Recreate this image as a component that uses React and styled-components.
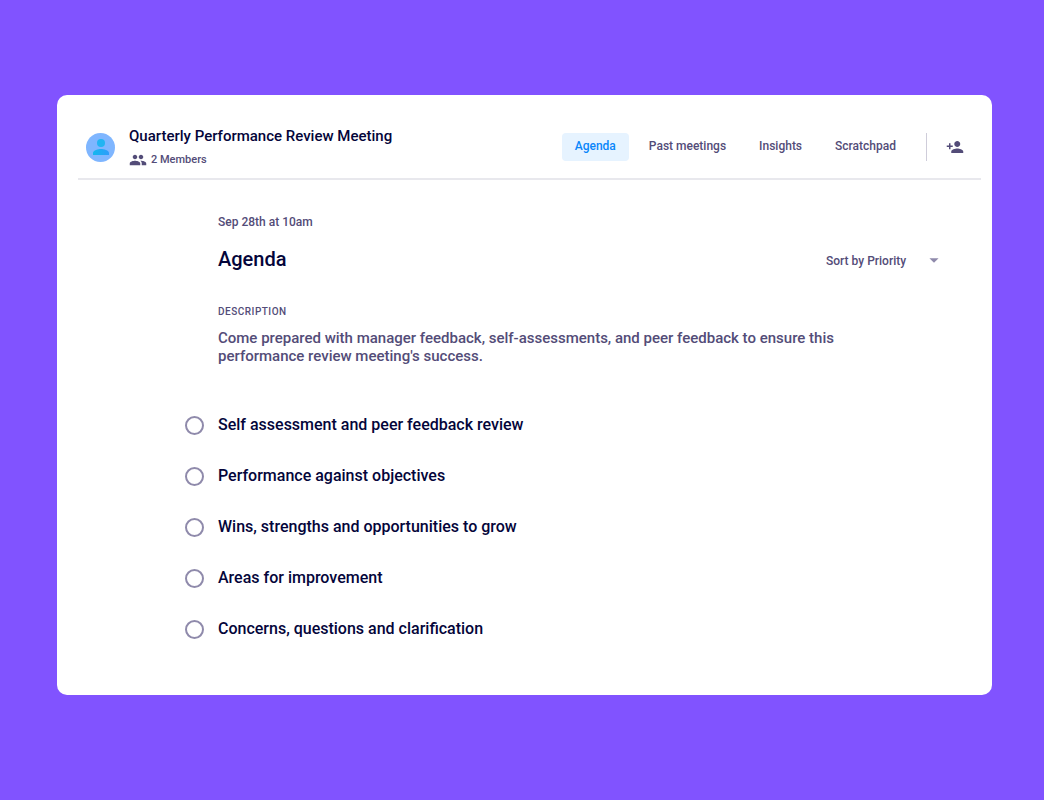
import { useState } from "react";
import styled, { ThemeProvider, createGlobalStyle } from "styled-components";
import { MdArrowDropDown, MdGroup, MdPersonAdd } from "react-icons/md";

const theme = {
  colors: {
    page: "#8153ff",
    card: "#ffffff",
    ink: "#04053a",
    muted: "#534c78",
    ring: "#8f8aab",
    line: "#e8e8ed",
    divider: "#cfcdda",
    active: "#0a86fa",
    activeBg: "#e6f3ff",
    avatar: "#7fb6ff",
  },
  fonts: {
    body: 'Roboto, "Liberation Sans", sans-serif',
  },
};

const GlobalStyle = createGlobalStyle`
  * {
    box-sizing: border-box;
  }

  body {
    margin: 0;
    background: ${({ theme }) => theme.colors.page};
    color: ${({ theme }) => theme.colors.ink};
    font-family: ${({ theme }) => theme.fonts.body};
    font-weight: 500;
  }

  button,
  select {
    font: inherit;
    color: inherit;
    border: 0;
    background: none;
    cursor: pointer;
  }
`;

const Page = styled.div`
  min-height: 100vh;
  padding: 95px 52px 105px 57px;
  display: flex;
`;

const Card = styled.main`
  flex: 1;
  min-width: 0;
  padding: 29px 11px 40px 21px;
  border-radius: 10px;
  background: ${({ theme }) => theme.colors.card};
`;

const Header = styled.header`
  display: flex;
  align-items: flex-start;
  justify-content: space-between;
  padding: 0 17px 8px 8px;
  border-bottom: 2px solid ${({ theme }) => theme.colors.line};
`;

const Meeting = styled.div`
  display: flex;
  align-items: center;
  gap: 14px;
`;

const Avatar = styled.div`
  display: flex;
  width: 29px;
  height: 29px;
  align-items: center;
  justify-content: center;
  border-radius: 50%;
  background: ${({ theme }) => theme.colors.avatar};
`;

const Title = styled.h1`
  margin: 0;
  font-size: 15px;
  font-weight: 500;
  line-height: 24px;
`;

const Members = styled.p`
  display: flex;
  align-items: center;
  gap: 4px;
  margin: 2px 0 0;
  font-size: 11px;
  line-height: 20px;
  color: ${({ theme }) => theme.colors.muted};
`;

const Nav = styled.nav`
  display: flex;
  align-items: center;
  gap: 7px;
  padding-top: 9px;
`;

const Tab = styled.button`
  height: 28px;
  padding: 0 13px 3px;
  border-radius: 4px;
  font-size: 12px;
  white-space: nowrap;
  color: ${({ theme, $active }) =>
    $active ? theme.colors.active : theme.colors.muted};
  background: ${({ theme, $active }) =>
    $active ? theme.colors.activeBg : "transparent"};
`;

const Invite = styled.button`
  display: flex;
  height: 28px;
  align-items: center;
  margin-left: 10px;
  padding: 0 0 0 19px;
  border-left: 1px solid ${({ theme }) => theme.colors.divider};
  color: ${({ theme }) => theme.colors.muted};
`;

const Content = styled.section`
  padding: 33px 36px 0 140px;
`;

const DateLine = styled.p`
  margin: 0;
  font-size: 12px;
  line-height: 18px;
  color: ${({ theme }) => theme.colors.muted};
`;

const SectionHead = styled.div`
  display: flex;
  align-items: center;
  justify-content: space-between;
  margin-top: 14px;
`;

const SectionTitle = styled.h2`
  margin: 0;
  font-size: 20px;
  font-weight: 500;
  line-height: 24px;
`;

const Sort = styled.div`
  display: grid;
  align-items: center;
  padding-top: 4px;
  color: ${({ theme }) => theme.colors.muted};

  select,
  svg {
    grid-area: 1 / 1;
  }

  svg {
    justify-self: end;
    margin-bottom: 2px;
    color: ${({ theme }) => theme.colors.ring};
    pointer-events: none;
  }
`;

const SortSelect = styled.select`
  appearance: none;
  height: 20px;
  padding: 0 38px 0 0;
  font-size: 12px;
`;

const Label = styled.h3`
  margin: 33px 0 0;
  font-size: 10px;
  font-weight: 500;
  line-height: 12px;
  letter-spacing: 0.5px;
  text-transform: uppercase;
  color: ${({ theme }) => theme.colors.muted};
`;

const Description = styled.p`
  margin: 11px 0 0;
  max-width: 640px;
  font-size: 15px;
  line-height: 18px;
  color: ${({ theme }) => theme.colors.muted};
`;

const TopicList = styled.ul`
  display: grid;
  gap: 30px;
  margin: 49px 0 0 -33px;
  padding: 0;
  list-style: none;
`;

const Topic = styled.label`
  display: flex;
  align-items: center;
  gap: 14px;
  width: fit-content;
  font-size: 16px;
  line-height: 20px;
  cursor: pointer;
`;

const Check = styled.input`
  appearance: none;
  width: 19px;
  height: 19px;
  margin: 2px 0 0;
  border: 2px solid ${({ theme }) => theme.colors.ring};
  border-radius: 50%;
  cursor: pointer;

  &:checked {
    background: ${({ theme }) => theme.colors.active};
  }
`;

const tabs = ["Agenda", "Past meetings", "Insights", "Scratchpad"];

const topics = [
  "Self assessment and peer feedback review",
  "Performance against objectives",
  "Wins, strengths and opportunities to grow",
  "Areas for improvement",
  "Concerns, questions and clarification",
];

function PersonIcon() {
  return (
    <svg width="24" height="24" viewBox="0 0 24 24" aria-hidden="true">
      <defs>
        <linearGradient id="person" x1="0" y1="0" x2="1" y2="0">
          <stop offset="0" stopColor="#12b8ee" />
          <stop offset="1" stopColor="#2f9cfb" />
        </linearGradient>
      </defs>
      <circle cx="12" cy="8" r="4" fill="#22b4f2" />
      <path
        d="M12 14c-2.67 0-8 1.34-8 4v2h16v-2c0-2.66-5.33-4-8-4z"
        fill="url(#person)"
      />
    </svg>
  );
}

export default function App() {
  const [tab, setTab] = useState("Agenda");

  return (
    <ThemeProvider theme={theme}>
      <GlobalStyle />
      <Page>
        <Card>
          <Header>
            <Meeting>
              <Avatar>
                <PersonIcon />
              </Avatar>
              <div>
                <Title>Quarterly Performance Review Meeting</Title>
                <Members>
                  <MdGroup size={18} />2 Members
                </Members>
              </div>
            </Meeting>
            <Nav>
              {tabs.map((name) => (
                <Tab
                  key={name}
                  type="button"
                  $active={name === tab}
                  onClick={() => setTab(name)}
                >
                  {name}
                </Tab>
              ))}
              <Invite type="button" aria-label="Add member">
                <MdPersonAdd size={18} />
              </Invite>
            </Nav>
          </Header>

          <Content>
            <DateLine>Sep 28th at 10am</DateLine>
            <SectionHead>
              <SectionTitle>Agenda</SectionTitle>
              <Sort>
                <SortSelect aria-label="Sort agenda">
                  <option>Sort by Priority</option>
                </SortSelect>
                <MdArrowDropDown size={22} />
              </Sort>
            </SectionHead>

            <Label>Description</Label>
            <Description>
              Come prepared with manager feedback, self-assessments, and peer
              feedback to ensure this performance review meeting's success.
            </Description>

            <TopicList>
              {topics.map((topic) => (
                <li key={topic}>
                  <Topic>
                    <Check type="checkbox" />
                    {topic}
                  </Topic>
                </li>
              ))}
            </TopicList>
          </Content>
        </Card>
      </Page>
    </ThemeProvider>
  );
}
